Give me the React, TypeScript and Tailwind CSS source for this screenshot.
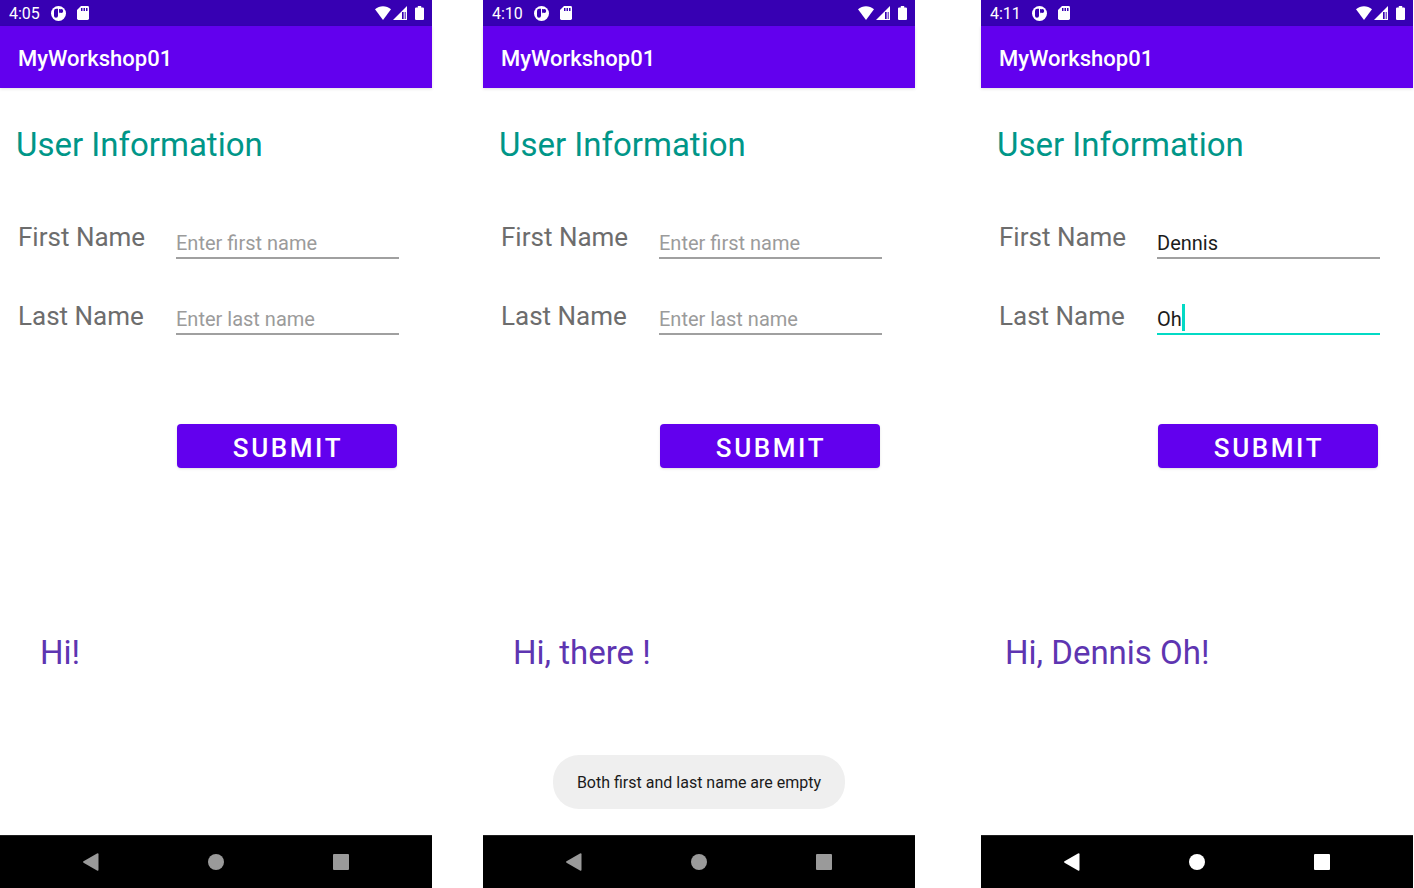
import React from "react";

type PhoneProps = {
  id: string;
  time: string;
  firstName?: string;
  lastName?: string;
  greeting: string;
  greetingClass: string;
  toast?: string;
  focused?: boolean;
  className?: string;
};

function StatusBar({ time }: { time: string }) {
  return (
    <div className="flex h-[26px] items-center bg-[#3700b3] pl-[9px] pr-2 text-white">
      <span className="w-[42px] pt-0.5 text-base leading-5">{time}</span>
      <svg className="h-4 w-4" viewBox="0 0 16 16" aria-hidden="true">
        <circle cx="7.5" cy="8.500" r="7.5" fill="#fff" />
        <path d="M5.200 3.800h1.800v6.900a2 2 0 0 1-2 2 2 2 0 0 1-2-2V6a2.200 2.200 0 0 1 2.200-2.200z" fill="#3700b3" />
        <path d="M8 4h.9v4.400a2.200 2.200 0 0 1-.9-1.800z" fill="#3700b3" />
        <circle cx="10.2" cy="6" r="2" fill="#3700b3" />
      </svg>
      <svg className="ml-2.5 h-4 w-3" viewBox="0 0 12 16" aria-hidden="true">
        <path d="M4 1h6.600A1.400 1.400 0 0 1 12 2.400v11.200a1.400 1.400 0 0 1-1.400 1.400H1.400A1.400 1.400 0 0 1 0 13.600V5z" fill="#fff" />
        <path d="M4 3h1.500v3H4zM6.500 3H8v3H6.500zM9 3h1.500v3H9z" fill="#3700b3" />
      </svg>
      <svg className="ml-auto h-4 w-4" viewBox="0 0 16 16" aria-hidden="true">
        <path d="M0 4.200C4.600.2 11.400.2 16 4.200L8 15z" fill="#fff" />
      </svg>
      <svg className="ml-0.5 h-4 w-3.5" viewBox="0 0 14 16" aria-hidden="true">
        <path d="M14 1v14H0z" fill="#fff" />
        <path d="M9 7h4v7H9z" fill="#3700b3" />
        <path d="M10.500 7h2v7h-2z" fill="#fff" opacity=".7" />
      </svg>
      <svg className="ml-2 h-4 w-[9px]" viewBox="0 0 9 16" aria-hidden="true">
        <path d="M2.800 1h3.400v1.500h1.600q1.200 0 1.200 1v10.400q0 1.100-1.100 1.100H1.100Q0 15 0 13.900V3.500q0-1 1.200-1h1.600z" fill="#fff" />
      </svg>
    </div>
  );
}

function NavBar({ bright }: { bright?: boolean }) {
  return (
    <nav
      className={`grid h-[53px] grid-cols-3 border-t border-[#1f1f1f] bg-black px-7 ${
        bright ? "text-white" : "text-[#9a9a9a]"
      }`}
    >
      <button type="button" aria-label="Back" className="grid place-items-center">
        <svg className="h-[18px] w-4" viewBox="0 0 16 18" aria-hidden="true">
          <path d="M.5 8.300 14 .5q1.500-.700 1.500.700v15.600q0 1.400-1.500.700L.5 9.700q-.9-.700 0-1.400z" fill="currentColor" />
        </svg>
      </button>
      <button type="button" aria-label="Home" className="grid place-items-center">
        <span className="h-4 w-4 rounded-full bg-current" />
      </button>
      <button type="button" aria-label="Recent apps" className="grid place-items-center">
        <span className="h-4 w-4 rounded-[1px] bg-current" />
      </button>
    </nav>
  );
}

function Phone({
  id,
  time,
  firstName,
  lastName,
  greeting,
  greetingClass,
  toast,
  focused,
  className = "",
}: PhoneProps) {
  const field =
    "h-[38px] w-full border-b-2 bg-transparent pt-2 text-xl leading-7 text-[#1b1b1b] outline-none placeholder:text-[#9b9b9b]";
  return (
    <section className={`flex min-h-screen min-w-0 flex-1 flex-col bg-white ${className}`}>
      <StatusBar time={time} />
      <header className="flex h-[62px] items-center bg-[#6200ee] px-[18px] pt-1 text-white shadow-[0_1px_3px_rgba(0,0,0,0.12)]">
        <h1 className="text-[22px] font-medium leading-7">MyWorkshop01</h1>
      </header>
      <main className="relative flex-1 pt-[37px]">
        <h2 className="pl-4 text-[33px] leading-10 text-[#009688]">User Information</h2>
        <form onSubmit={(e) => e.preventDefault()}>
          <div className="mt-14 grid grid-cols-[158px_1fr] pl-[18px] pr-[33px]">
            <div className="flex flex-col gap-[47px] whitespace-nowrap text-[26px] leading-8 text-[#6d6d6d]">
              <label htmlFor={`${id}-first`}>First Name</label>
              <label htmlFor={`${id}-last`}>Last Name</label>
            </div>
            <div className="flex flex-col gap-[38px]">
              <input
                id={`${id}-first`}
                type="text"
                placeholder="Enter first name"
                defaultValue={firstName}
                className={`${field} border-[#a0a0a0]`}
              />
              <div className="relative">
                <input
                  id={`${id}-last`}
                  type="text"
                  placeholder="Enter last name"
                  defaultValue={lastName}
                  className={`${field} ${focused ? "border-[#03dac5] caret-[#03dac5]" : "border-[#a0a0a0]"}`}
                />
                {focused && <span className="absolute left-[25px] top-[7px] h-[27px] w-[3px] bg-[#03dac5]" />}
              </div>
            </div>
          </div>
          <div className="mt-[89px] pl-[177px] pr-[35px]">
            <button
              type="submit"
              className="block h-11 w-full rounded bg-[#6200ee] pl-0.5 pt-1 text-[26px] font-medium leading-8 tracking-widest text-white shadow-sm"
            >
              SUBMIT
            </button>
          </div>
        </form>
        <p className={`mt-[165px] text-[33px] leading-10 text-[#5e35b1] ${greetingClass}`}>{greeting}</p>
        {toast && (
          <div className="absolute inset-x-0 bottom-[26px] flex justify-center">
            <div role="status" className="rounded-[26px] bg-[#efefef] px-6 pb-4 pt-[18px] text-base leading-5 text-[#1b1b1b]">
              {toast}
            </div>
          </div>
        )}
      </main>
      <NavBar bright={focused} />
    </section>
  );
}

export default function App() {
  return (
    <div className="flex min-h-screen bg-white pr-px font-['Roboto',sans-serif]">
      <Phone id="initial" time="4:05" greeting="Hi!" greetingClass="pl-10" />
      <Phone
        id="empty"
        time="4:10"
        greeting="Hi, there !"
        greetingClass="pl-[30px]"
        toast="Both first and last name are empty"
        className="ml-[51px]"
      />
      <Phone
        id="filled"
        time="4:11"
        firstName="Dennis"
        lastName="Oh"
        greeting="Hi, Dennis Oh!"
        greetingClass="pl-6"
        focused
        className="ml-[66px]"
      />
    </div>
  );
}
